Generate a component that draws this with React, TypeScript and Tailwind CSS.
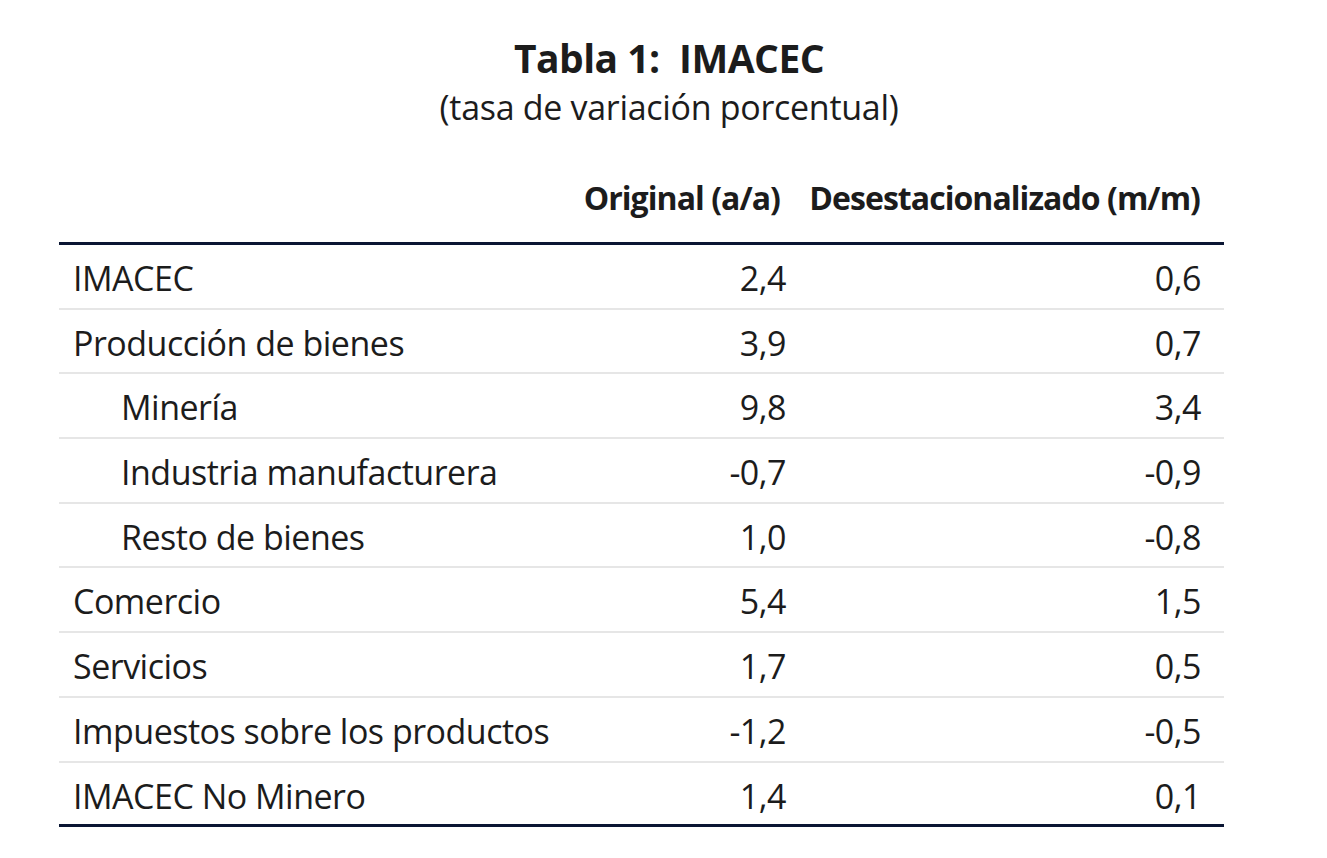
import React from 'react';

type Row = { label: string; orig: string; desest: string; indent?: boolean };

const rows: Row[] = [
  { label: 'IMACEC', orig: '2,4', desest: '0,6' },
  { label: 'Producción de bienes', orig: '3,9', desest: '0,7' },
  { label: 'Minería', orig: '9,8', desest: '3,4', indent: true },
  { label: 'Industria manufacturera', orig: '-0,7', desest: '-0,9', indent: true },
  { label: 'Resto de bienes', orig: '1,0', desest: '-0,8', indent: true },
  { label: 'Comercio', orig: '5,4', desest: '1,5' },
  { label: 'Servicios', orig: '1,7', desest: '0,5' },
  { label: 'Impuestos sobre los productos', orig: '-1,2', desest: '-0,5' },
  { label: 'IMACEC No Minero', orig: '1,4', desest: '0,1' },
];

const App: React.FC = () => {
  return (
    <div className="w-[1327px] h-[858px] bg-white text-[#1c1c1c] font-['Open_Sans','Noto_Sans',sans-serif]">
      {/* Title */}
      <div className="pl-[11px] pt-[35px] text-center">
        <h1 className="text-[39px] leading-[46px] font-bold whitespace-pre tracking-[-0.5px]">Tabla 1:  IMACEC</h1>
        <p className="text-[34px] leading-[52px] tracking-[-0.3px]">(tasa de variación porcentual)</p>
      </div>

      {/* Table */}
      <div className="ml-[59px] w-[1165px] tracking-[-0.5px]">
        <div className="grid grid-cols-[509px_232px_424px] h-[112px] items-end pb-[22px] text-[32px] leading-[44px] tracking-[-0.95px] font-bold border-b-[3px] border-[#0a1633]">
          <div />
          <div className="text-right pr-[20px] whitespace-nowrap">Original (a/a)</div>
          <div className="text-right pr-[24px] whitespace-nowrap">Desestacionalizado (m/m)</div>
        </div>
        {rows.map((r, i) => (
          <div
            key={r.label}
            className={`grid grid-cols-[509px_232px_424px] h-[64.7px] items-start pt-[10px] text-[34px] leading-[46px] ${
              i === rows.length - 1 ? 'border-b-[3px] border-[#0a1633]' : 'border-b-2 border-[#e6e6e6]'
            }`}
          >
            <div className={r.indent ? 'pl-[62px]' : 'pl-[14px]'}>{r.label}</div>
            <div className="text-right pr-[14px]">{r.orig}</div>
            <div className="text-right pr-[23px]">{r.desest}</div>
          </div>
        ))}
      </div>
    </div>
  );
};

export default App;
